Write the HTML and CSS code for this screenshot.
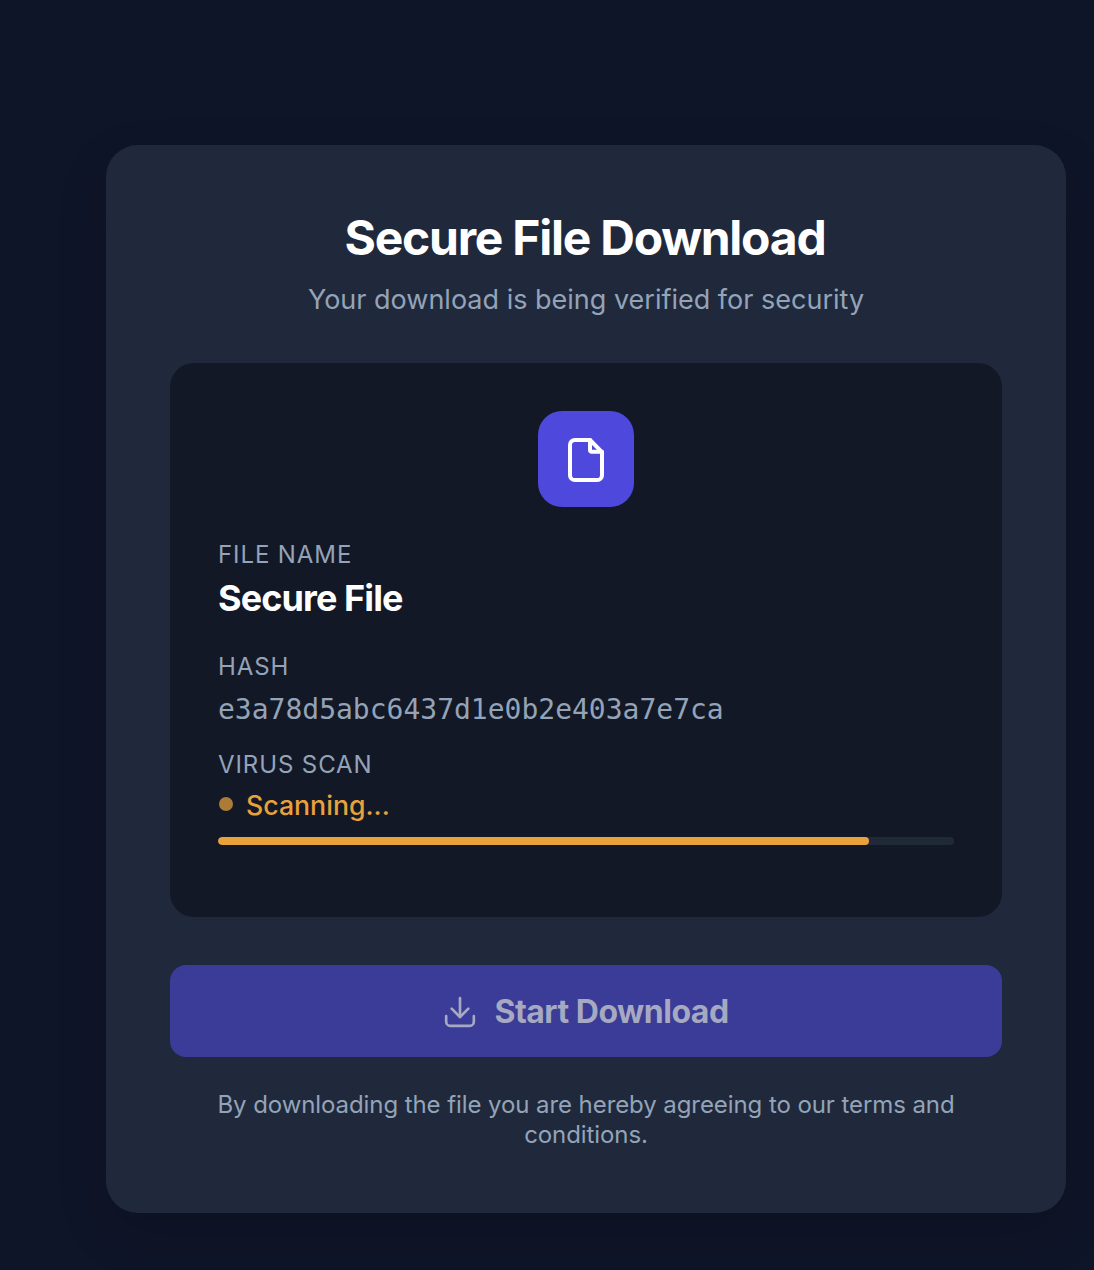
FILE: index.html
```html
<!DOCTYPE html>
<html lang="en">
<head>
    <meta charset="UTF-8">
    <meta name="viewport" content="width=device-width, initial-scale=1.0">
    <title>Secure File Download</title>
    <link rel="stylesheet" href="styles.css">
</head>
<body>
    <div class="card">
        <h1 class="title">Secure File Download</h1>
        <p class="subtitle">Your download is being verified for security</p>

        <div class="file-box">
            <div class="file-icon">
                <svg width="48" height="48" viewBox="0 0 24 24" fill="none" stroke="#fff" stroke-width="2" stroke-linecap="round" stroke-linejoin="round">
                    <path d="M6.4 22.5h11.2a2.4 2.4 0 0 0 2.4-2.4V8.6l-6-6.1H6.4A2.4 2.4 0 0 0 4 4.9v15.2a2.4 2.4 0 0 0 2.4 2.4z"/>
                    <path d="M14 2.5v5.1a.8.8 0 0 0 .8.8H20"/>
                </svg>
            </div>

            <div class="label">FILE NAME</div>
            <div class="file-name">Secure File</div>

            <div class="label">HASH</div>
            <div class="hash">e3a78d5abc6437d1e0b2e403a7e7ca</div>

            <div class="label">VIRUS SCAN</div>
            <div class="scan-status">
                <span class="dot"></span>
                <span class="scan-text">Scanning...</span>
            </div>
            <div class="progress">
                <div class="progress-bar" style="width: 88.5%"></div>
            </div>
        </div>

        <button class="download-btn" type="button">
            <svg width="36" height="40" viewBox="1.8 -.6 21.6 24" fill="none" stroke="currentColor" stroke-width="1.6" stroke-linecap="round" stroke-linejoin="round">
                <path d="M3.7 14.5v3.3a2.5 2.5 0 0 0 2.5 2.5h11.6a2.5 2.5 0 0 0 2.5-2.5v-3.3"/>
                <path d="M7 10l5 5 5-5"/>
                <path d="M12 3.7V15"/>
            </svg>
            Start Download
        </button>

        <p class="terms">By downloading the file you are hereby agreeing to our terms and conditions.</p>
    </div>
</body>
</html>
```

FILE: styles.css
```css
*{
    margin: 0;
    padding: 0;
    box-sizing: border-box;
}
body{
    background-color: #0f1528;
    font-family: Inter, "Liberation Sans", sans-serif;
    height: 1270px;
    overflow: hidden;
    padding: 145px 28px 0 0;
}
.card{
    width: 960px;
    height: 1068px;
    margin-left: auto;
    padding: 64px;
    background-color: #1f293b;
    border-radius: 32px;
    box-shadow: 0 20px 50px rgba(0, 0, 0, .15);
}
.title{
    padding-right: 2px;
    font-size: 48px;
    line-height: 58px;
    font-weight: 700;
    letter-spacing: -1.25px;
    color: #fff;
    text-align: center;
}
.subtitle{
    margin-top: 11px;
    font-size: 27px;
    line-height: 44px;
    color: #94a3b8;
    text-align: center;
}
.file-box{
    height: 554px;
    margin-top: 41px;
    padding: 48px;
    background-color: #121826;
    border-radius: 24px;
}
.file-icon{
    display: flex;
    align-items: center;
    justify-content: center;
    width: 96px;
    height: 96px;
    margin: 0 auto 32px;
    background-color: #4f48dc;
    border-radius: 24px;
}
.label{
    font-size: 24px;
    line-height: 32px;
    letter-spacing: .9px;
    color: #94a3b8;
}
.file-name{
    margin-top: 5px;
    margin-bottom: 31px;
    font-size: 36px;
    line-height: 44px;
    font-weight: 700;
    letter-spacing: -.9px;
    color: #fff;
}
.hash{
    margin-top: 8px;
    margin-bottom: 20px;
    font-family: "DejaVu Sans Mono", monospace;
    font-size: 28px;
    line-height: 38px;
    color: #94a3b8;
}
.scan-status{
    display: flex;
    align-items: center;
    gap: 13px;
    margin-top: 4px;
}
.dot{
    width: 14px;
    height: 14px;
    margin: 0 0 2px 1px;
    border-radius: 50%;
    background-color: #ac7c37;
}
.scan-text{
    font-size: 26.7px;
    line-height: 40px;
    font-weight: 500;
    color: #e9a23b;
}
.progress{
    height: 8px;
    margin-top: 12px;
    background-color: #1f2937;
    border-radius: 4px;
    overflow: hidden;
}
.progress-bar{
    height: 100%;
    background-color: #e9a23b;
    border-radius: 4px;
}
.download-btn{
    display: flex;
    align-items: center;
    justify-content: center;
    gap: 15px;
    width: 100%;
    height: 92px;
    margin-top: 48px;
    border: none;
    border-radius: 16px;
    background-color: #3a3c98;
    color: #a6a9c0;
    font-family: inherit;
    font-size: 32px;
    font-weight: 700;
    letter-spacing: -.5px;
}
.terms{
    margin-top: 33px;
    font-size: 24px;
    line-height: 30px;
    letter-spacing: -.08px;
    color: #94a3b8;
    text-align: center;
}
```
